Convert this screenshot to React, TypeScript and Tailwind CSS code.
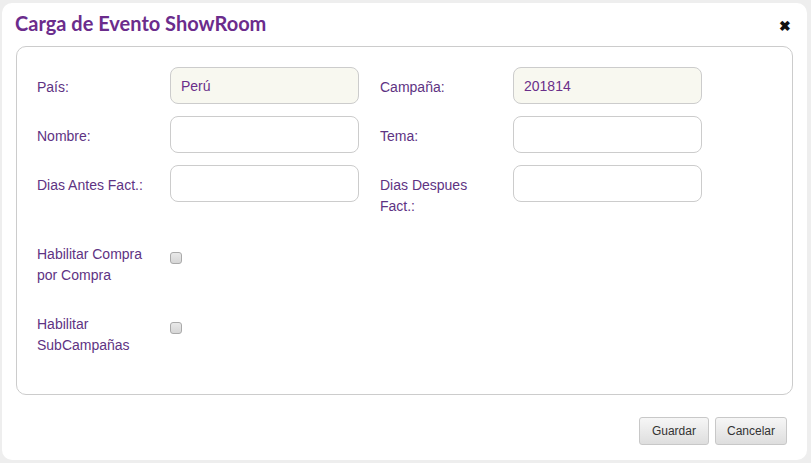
import { useState } from 'react';

function Field({ label, value = '', readOnly = false }: { label: string; value?: string; readOnly?: boolean }) {
    const [val, setVal] = useState(value);
    return (
        <div className="flex items-start">
            <label className="w-[133px] shrink-0 pt-[10px] leading-[21px] pr-2">{label}</label>
            <input
                type="text"
                value={val}
                readOnly={readOnly}
                onChange={(e) => setVal(e.target.value)}
                className={`w-[189px] h-[37px] rounded-[8px] border border-[#cccccc] px-[10px] text-[14px] text-[#6a2f8a] outline-none ${readOnly ? 'bg-[#f8f8f0]' : 'bg-white'}`}
            />
        </div>
    );
}

function CheckRow({ label }: { label: string }) {
    return (
        <div className="flex items-start">
            <label className="w-[133px] shrink-0 leading-[21px] pr-2">{label}</label>
            <span className="mt-[8px] w-[12px] h-[12px] rounded-[3px] border border-[#aaaaaa] bg-gradient-to-b from-[#e9e9e9] to-[#d6d6d6]" />
        </div>
    );
}

export default function App() {
    return (
        <div className="w-[811px] h-[463px] bg-[#eeeeee] relative overflow-hidden" style={{ fontFamily: '"Liberation Sans", Arial, sans-serif' }}>
            <div className="absolute left-[2px] top-[3px] w-[805px] h-[457px] bg-white rounded-[10px] flex flex-col">
                {/* Header */}
                <div className="flex items-center justify-between h-[38px] pl-[13px] pr-[16px] pt-[2px]">
                    <h2 className="text-[20px] font-bold text-[#6b2c8c]" style={{ fontFamily: 'Lato, "Noto Sans", sans-serif' }}>
                        Carga de Evento ShowRoom
                    </h2>
                    <span className="text-[14px] text-[#111] font-bold leading-none mt-[5px]">✖</span>
                </div>

                {/* Body panel */}
                <div className="mx-[14px] mt-[5px] h-[349px] border border-[#cccccc] rounded-[10px] pl-[20px] pt-[20px] text-[14px] text-[#5e3383]">
                    <div className="grid grid-cols-[343px_343px] gap-y-[12px]">
                        <Field label="País:" value="Perú" readOnly />
                        <Field label="Campaña:" value="201814" readOnly />
                        <Field label="Nombre:" />
                        <Field label="Tema:" />
                        <Field label="Dias Antes Fact.:" />
                        <Field label="Dias Despues Fact.:" />
                    </div>
                    <div className="mt-[27px] flex flex-col gap-[28px]">
                        <CheckRow label="Habilitar Compra por Compra" />
                        <CheckRow label="Habilitar SubCampañas" />
                    </div>
                </div>

                {/* Footer */}
                <div className="flex justify-end gap-[6px] pr-[20px] mt-[22px]">
                    <button className="h-[28px] px-[12px] rounded-[3px] border border-[#c8c8c8] bg-gradient-to-b from-[#f6f6f6] to-[#dedede] text-[12px] text-[#333]">
                        Guardar
                    </button>
                    <button className="h-[28px] px-[11px] rounded-[3px] border border-[#c8c8c8] bg-gradient-to-b from-[#f6f6f6] to-[#dedede] text-[12px] text-[#333]">
                        Cancelar
                    </button>
                </div>
            </div>
        </div>
    );
}
